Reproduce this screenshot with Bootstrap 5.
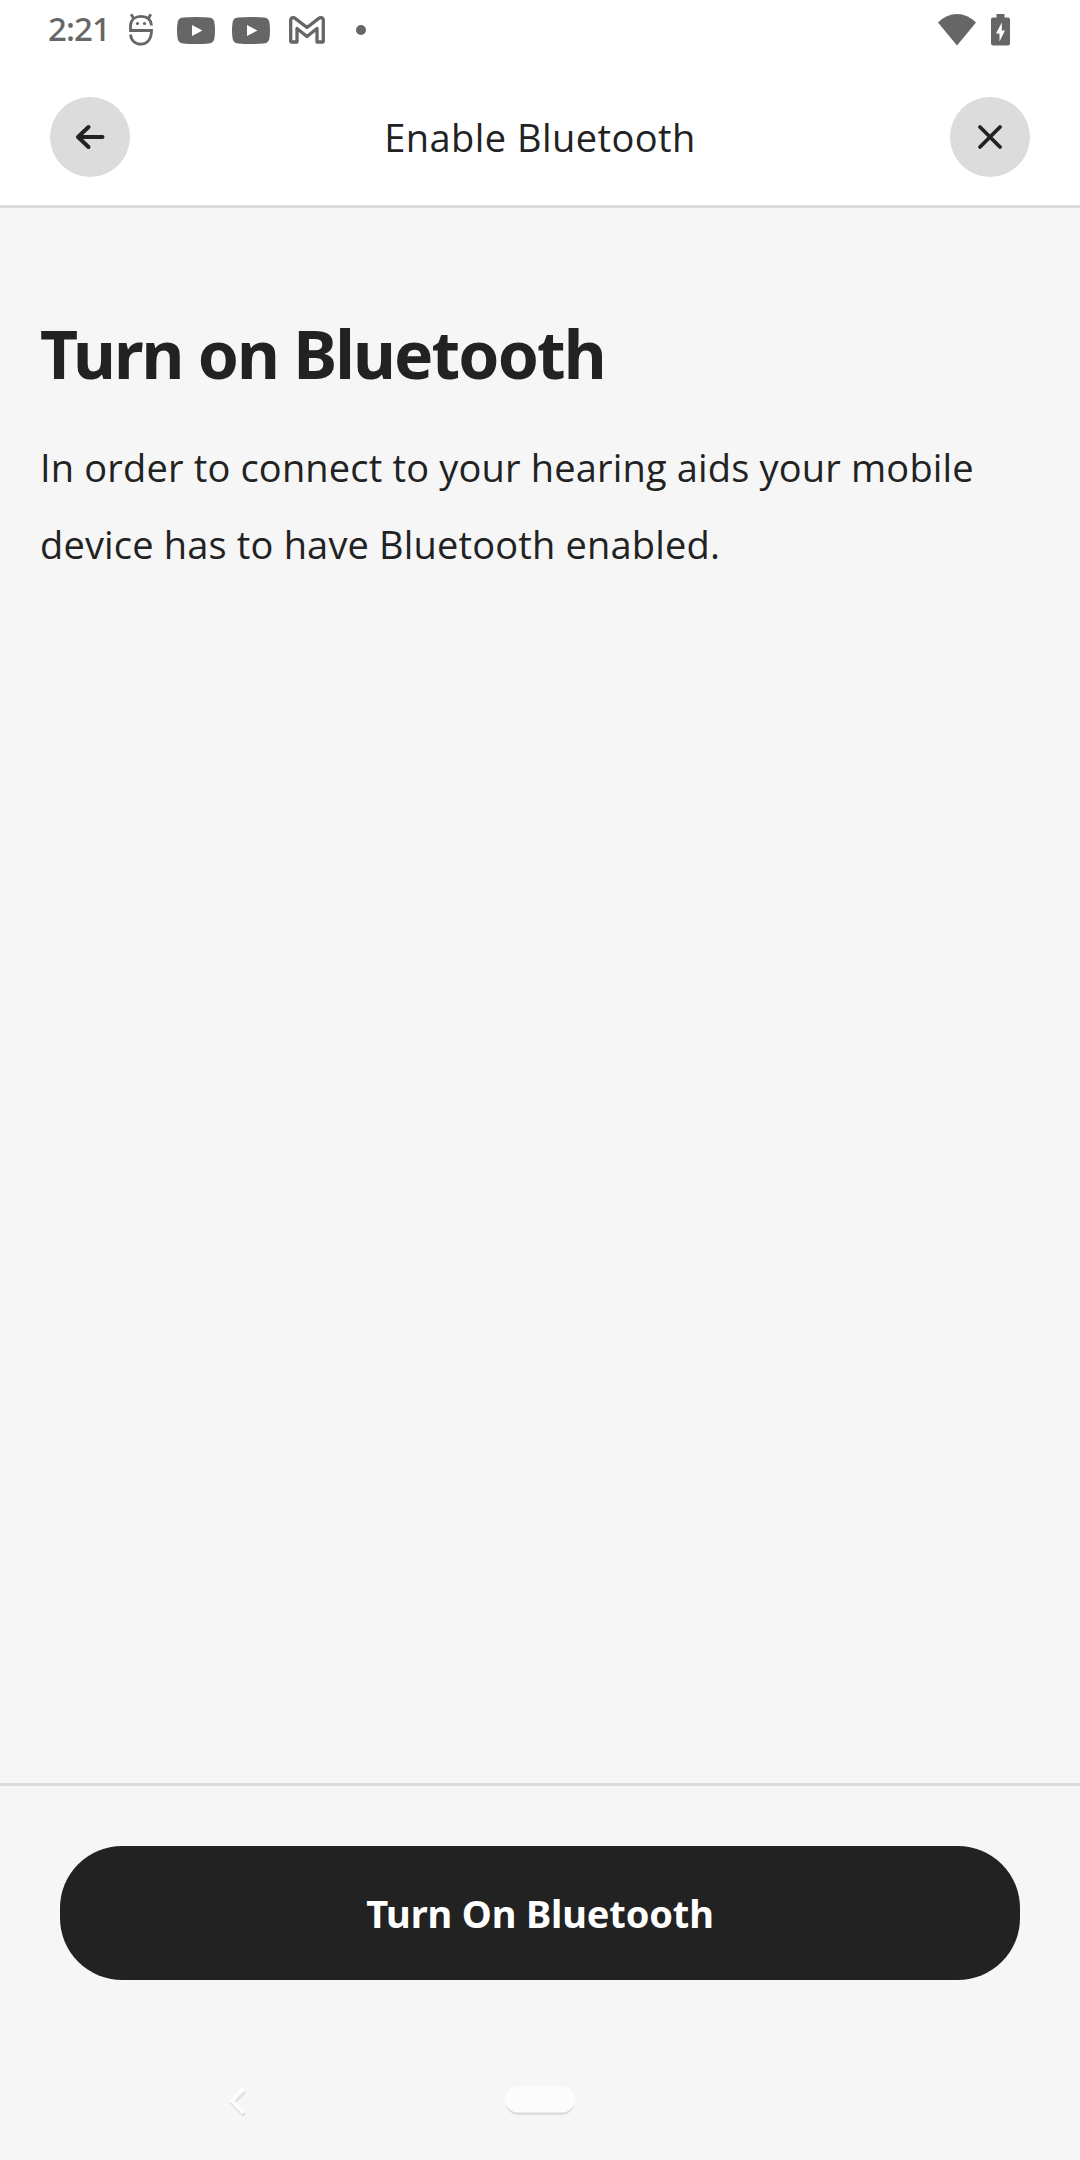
<!DOCTYPE html>
<html lang="en">
<head>
<meta charset="utf-8">
<title>Enable Bluetooth</title>
<meta name="viewport" content="width=device-width, initial-scale=1">
<link href="https://cdn.jsdelivr.net/npm/bootstrap@5.3.0/dist/css/bootstrap.min.css" rel="stylesheet">
<style>
  body { background: #f6f6f6; color: #222; font-family: "Open Sans", "Noto Sans", sans-serif; }
  .screen { height: 2160px; }
  svg { display: block; flex: none; }
  .status-bar { height: 60px; padding: 0 70px 0 48px; color: #666; }
  .clock { font-family: "Noto Sans", sans-serif; font-size: 33px; font-weight: 500; line-height: 56px; letter-spacing: -.9px; width: 81px; margin-top: -2px; }
  .app-header { height: 148px; padding: 37px 50px 28px; border-bottom: 3px solid #dcdcdc; }
  .round-btn { width: 80px; height: 80px; background: #dcdcdc; color: #222; }
  .app-title { font-size: 38px; font-weight: 400; line-height: 80px; letter-spacing: .44px; }
  .content { padding: 105px 40px 0; }
  .headline { font-family: "Noto Sans", sans-serif; font-size: 66px; font-weight: 700; line-height: 80px; letter-spacing: -1.9px; margin-bottom: 36px; }
  .copy { font-size: 38px; font-weight: 400; line-height: 77px; letter-spacing: .17px; }
  .action-area { border-top: 3px solid #dcdcdc; padding: 60px 60px 0; height: 257px; }
  .btn-action { --bs-btn-bg: #222; --bs-btn-color: #fff; --bs-btn-border-width: 0; --bs-btn-border-radius: 62px; --bs-btn-padding-y: 0; height: 134px; font-family: "Noto Sans", sans-serif; font-size: 38px; font-weight: 700; line-height: 132px; letter-spacing: -.15px; }
  .system-nav { height: 120px; padding-top: 41px; }
</style>
</head>
<body>
<div class="screen d-flex flex-column">
  <div class="status-bar bg-white d-flex align-items-center justify-content-between">
    <div class="d-flex align-items-center">
      <span class="clock">2:21</span>
      <svg width="24" height="34" viewBox="0 0 24 34" fill="none" stroke="currentColor" stroke-width="2.8">
        <path d="M22.500 12.500C22 6.300 17.700 3.400 12 3.400S1.600 6.500 1.500 13v4.500h21c0 8.800-4.500 13.700-10.500 13.700S1.700 27.200 1.700 21.500"/>
        <path d="M2.200 1.200L4.500 5.200M21.800 1.200L19.500 5.200"/>
        <circle cx="8.500" cy="10.500" r="1.600" fill="currentColor" stroke="none"/><circle cx="15.500" cy="10.500" r="1.600" fill="currentColor" stroke="none"/>
      </svg>
      <svg class="ms-4" width="38" height="27" viewBox="0 0 38 27"><path fill="currentColor" fill-rule="evenodd" d="M6 .6Q19-.6 32 .6Q37 1 37.500 6Q38.500 13.500 37.500 21Q37 26 32 26.400Q19 27.600 6 26.400Q1 26 .5 21Q-.5 13.500 .5 6Q1 1 6 .6ZM15 8v11l10.500-5.500Z"/></svg>
      <svg style="margin-left:17px" width="38" height="27" viewBox="0 0 38 27"><path fill="currentColor" fill-rule="evenodd" d="M6 .6Q19-.6 32 .6Q37 1 37.500 6Q38.500 13.500 37.500 21Q37 26 32 26.400Q19 27.600 6 26.400Q1 26 .5 21Q-.5 13.500 .5 6Q1 1 6 .6ZM15 8v11l10.500-5.500Z"/></svg>
      <svg style="margin-left:19px" width="36" height="28" viewBox="0 0 36 28" fill="none" stroke="currentColor" stroke-width="3.300" stroke-linejoin="round"><path d="M1.700 25V4.500C1.700 1.500 4.500.8 6.500 2.600L18 11.500 29.500 2.600C31.500.8 34.300 1.500 34.300 4.500V25Q34.300 26 33.300 26H28V12.500L18 20.500 8 12.500V26H2.700Q1.700 26 1.700 25Z"/></svg>
      <svg style="margin-left:31px" width="10" height="10"><circle cx="5" cy="5" r="5" fill="currentColor"/></svg>
    </div>
    <div class="d-flex align-items-center">
      <svg width="38" height="32" viewBox="0 0 38 32"><path fill="currentColor" d="M0 8.500Q8.500 0 19 0T38 8.500L19 31.500Z"/></svg>
      <svg style="margin-left:15px" width="19" height="32" viewBox="0 0 19 32"><path fill="currentColor" fill-rule="evenodd" d="M5.500 0h8v3.500H17q2 0 2 2V29.500q0 2-2 2H2q-2 0-2-2V5.500q0-2 2-2H5.500ZM10.800 8.500L5 19.500h3.500v8L14 16.500h-3.200Z"/></svg>
    </div>
  </div>

  <header class="app-header bg-white d-flex justify-content-between">
    <button class="round-btn btn rounded-circle border-0 p-0 d-flex align-items-center justify-content-center" aria-label="Back">
      <svg width="30" height="26" viewBox="0 0 30 26" fill="none" stroke="currentColor" stroke-width="4" stroke-linecap="round" stroke-linejoin="round"><path d="M27.500 13H3M13.500 3L3 13l10.500 10"/></svg>
    </button>
    <h1 class="app-title m-0">Enable Bluetooth</h1>
    <button class="round-btn btn rounded-circle border-0 p-0 d-flex align-items-center justify-content-center" aria-label="Close">
      <svg width="26" height="26" viewBox="0 0 26 26" fill="none" stroke="currentColor" stroke-width="3.800" stroke-linecap="round"><path d="M3 3L23 23M23 3L3 23"/></svg>
    </button>
  </header>

  <main class="content flex-grow-1">
    <h2 class="headline">Turn on Bluetooth</h2>
    <p class="copy m-0">In order to connect to your hearing aids your mobile<br>device has to have Bluetooth enabled.</p>
  </main>

  <div class="action-area">
    <button class="btn btn-action w-100">Turn On Bluetooth</button>
  </div>

  <nav class="system-nav">
    <svg width="1080" height="50" viewBox="0 0 1080 50" fill="none">
      <g stroke="#e2e2e2"><path d="M244.500 10.500L232.500 22.500l12 12" stroke-width="4"/><rect x="505.500" y="8" width="69" height="26" rx="13" fill="#dadada" stroke="#ececec"/></g>
      <path d="M243.500 7.500L232 19.500l11.500 12" stroke="#fdfdfd" stroke-width="4"/>
      <rect x="505" y="5.500" width="70" height="26" rx="13" fill="#fcfcfc"/>
    </svg>
  </nav>
</div>
<script src="https://cdn.jsdelivr.net/npm/bootstrap@5.3.0/dist/js/bootstrap.bundle.min.js"></script>
</body>
</html>
